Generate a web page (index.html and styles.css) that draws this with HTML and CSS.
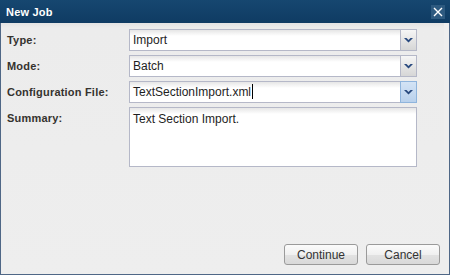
FILE: index.html
```html
<!DOCTYPE html>
<html lang="en">
<head>
    <meta charset="UTF-8">
    <title>New Job</title>
    <link rel="stylesheet" href="styles.css">
</head>
<body>
    <div class="window">
        <div class="titlebar">
            <span class="title">New Job</span>
            <span class="close">
                <svg width="10" height="10" viewBox="0 0 10 10"><path d="M1 1L9 9M9 1L1 9" stroke="#fff" stroke-width="1.4"/></svg>
            </span>
        </div>
        <div class="body">
            <div class="form">
                <label>Type:</label>
                <div class="combo">
                    <div class="field">Import</div>
                    <div class="trigger"><svg width="9" height="5" viewBox="0 0 9 5"><polygon points="0,0 2.5,0 4.5,2 6.5,0 9,0 4.5,4.5" fill="#28497e"/></svg></div>
                </div>

                <label>Mode:</label>
                <div class="combo">
                    <div class="field">Batch</div>
                    <div class="trigger"><svg width="9" height="5" viewBox="0 0 9 5"><polygon points="0,0 2.5,0 4.5,2 6.5,0 9,0 4.5,4.5" fill="#28497e"/></svg></div>
                </div>

                <label>Configuration File:</label>
                <div class="combo focus">
                    <div class="field">TextSectionImport.xml<span class="caret"></span></div>
                    <div class="trigger"><svg width="9" height="5" viewBox="0 0 9 5"><polygon points="0,0 2.5,0 4.5,2 6.5,0 9,0 4.5,4.5" fill="#28497e"/></svg></div>
                </div>

                <label>Summary:</label>
                <div class="textarea">Text Section Import.</div>
            </div>
            <div class="footer">
                <button>Continue</button>
                <button>Cancel</button>
            </div>
        </div>
    </div>
</body>
</html>
```

FILE: styles.css
```css
body{
    margin: 0;
    background: #ffffff;
}
.window{
    width: 450px;
    height: 275px;
    box-sizing: border-box;
    display: flex;
    flex-direction: column;
    background: #eeeeee;
    border: 1px solid #4f6786;
    border-top: none;
}
.titlebar{
    height: 23px;
    display: flex;
    align-items: center;
    justify-content: space-between;
    padding: 0 5px 0 6px;
    background: linear-gradient(#164770, #0f3b63);
    margin: 0 -1px;
}
.title{
    color: #ffffff;
    font: bold 11px "Liberation Sans", Arial, sans-serif;
    letter-spacing: 0.2px;
}
.close{
    width: 14px;
    height: 14px;
    display: flex;
    align-items: center;
    justify-content: center;
    background: #2e5a80;
}
.body{
    flex: 1;
    display: flex;
    flex-direction: column;
    justify-content: space-between;
    margin-right: 5px;
    background: linear-gradient(#e3e3e3, #ececec 5px, #eeeeee);
}
.form{
    display: grid;
    grid-template-columns: 122px 288px;
    row-gap: 4px;
    padding: 6px 0 0 6px;
}
.form label{
    font: bold 11px "Liberation Sans", Arial, sans-serif;
    letter-spacing: 0.2px;
    color: #35332f;
    line-height: 22px;
}
.combo{
    display: flex;
    height: 22px;
}
.field, .textarea{
    flex: 1;
    box-sizing: border-box;
    border: 1px solid #b5b8c8;
    background: linear-gradient(#e6e6e6, #ffffff 6px);
    font: 12px "Liberation Sans", Arial, sans-serif;
    color: #1e1e1e;
    padding: 0 3px;
    line-height: 20px;
}
.field{
    border-right: none;
}
.caret{
    display: inline-block;
    width: 1px;
    height: 15px;
    background: #000;
    vertical-align: -3px;
    margin-left: 1px;
}
.trigger{
    width: 17px;
    box-sizing: border-box;
    border: 1px solid #b5b8c8;
    background: linear-gradient(#f6f6f6, #e2e2e2 60%, #d6d6d6);
    display: flex;
    align-items: center;
    justify-content: center;
}
.focus .trigger{
    border-color: #8fb4dc;
    background: linear-gradient(#d3e3f5, #b9d1ec);
}
.textarea{
    height: 60px;
    padding-top: 1px;
}
.footer{
    display: flex;
    justify-content: flex-end;
    gap: 8px;
    padding: 0 4px 9px 0;
}
.footer button{
    width: 74px;
    height: 21px;
    border: 1px solid #9a9a9a;
    border-radius: 3px;
    background: linear-gradient(#fbfbfb, #f0f0f0 50%, #e2e2e2 51%, #d9d9d9);
    font: 12px "Liberation Sans", Arial, sans-serif;
    color: #333333;
    padding: 0;
}
```
